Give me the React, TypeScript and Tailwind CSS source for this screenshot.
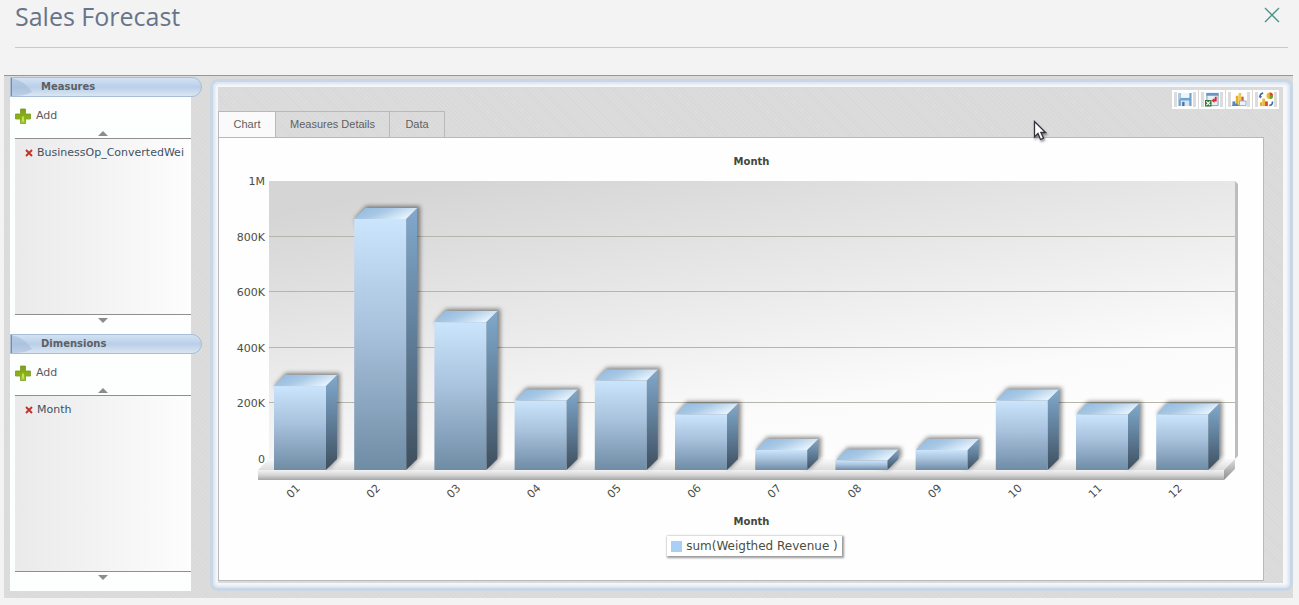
import type { ReactNode } from "react";

const bars = [
  { month: "01", value: 302 },
  { month: "02", value: 903 },
  { month: "03", value: 532 },
  { month: "04", value: 250 },
  { month: "05", value: 322 },
  { month: "06", value: 200 },
  { month: "07", value: 72 },
  { month: "08", value: 34 },
  { month: "09", value: 72 },
  { month: "10", value: 250 },
  { month: "11", value: 200 },
  { month: "12", value: 200 },
];

const ticks = [
  { label: "1M", value: 1000 },
  { label: "800K", value: 800 },
  { label: "600K", value: 600 },
  { label: "400K", value: 400 },
  { label: "200K", value: 200 },
  { label: "0", value: 0 },
];

// plot geometry, in svg units
const WALL_LEFT = 50;
const WALL_RIGHT = 1016;
const WALL_TOP = 11;
const WALL_BOTTOM = 289;
const DEPTH = 11;
const FLOOR = WALL_BOTTOM + DEPTH;
const BAR_WIDTH = 52;
const BAR_STEP = 80.2;

const yFor = (value: number) => WALL_BOTTOM - (value / 1000) * (WALL_BOTTOM - WALL_TOP);

function ForecastChart() {
  return (
    <svg viewBox="0 0 1044 340" className="block h-auto w-full" role="img" aria-label="Weighted revenue by month">
      <defs>
        <linearGradient id="wall" x1="0.2" y1="0" x2="0.8" y2="1">
          <stop offset="0" stopColor="#d5d5d5" />
          <stop offset="0.4" stopColor="#e9e9e9" />
          <stop offset="0.75" stopColor="#fbfbfb" />
          <stop offset="1" stopColor="#fefefe" />
        </linearGradient>
        <linearGradient id="front" x1="0" y1="0" x2="0" y2="1">
          <stop offset="0" stopColor="#cbe5fd" />
          <stop offset="0.45" stopColor="#a8c1dc" />
          <stop offset="1" stopColor="#6f8ca5" />
        </linearGradient>
        <linearGradient id="side" x1="0" y1="0" x2="0" y2="1">
          <stop offset="0" stopColor="#81a9cc" />
          <stop offset="0.5" stopColor="#5f7d98" />
          <stop offset="1" stopColor="#3e4f5e" />
        </linearGradient>
        <linearGradient id="top" x1="0" y1="0" x2="1" y2="0.4">
          <stop offset="0" stopColor="#8fb8de" />
          <stop offset="0.5" stopColor="#a8c8e5" />
          <stop offset="1" stopColor="#e4f2fd" />
        </linearGradient>
        <linearGradient id="floor" x1="0" y1="0" x2="0" y2="1">
          <stop offset="0" stopColor="#fafafa" />
          <stop offset="1" stopColor="#dcdcdc" />
        </linearGradient>
        <linearGradient id="ledge" x1="0" y1="0" x2="0" y2="1">
          <stop offset="0" stopColor="#f3f3f3" />
          <stop offset="0.5" stopColor="#d6d6d6" />
          <stop offset="1" stopColor="#a5a5a5" />
        </linearGradient>
        <linearGradient id="ledgeEnd" x1="0" y1="0" x2="0" y2="1">
          <stop offset="0" stopColor="#dedede" />
          <stop offset="1" stopColor="#8d8d8d" />
        </linearGradient>
        <filter id="barShadow" x="-20%" y="-40%" width="150%" height="180%">
          <feGaussianBlur stdDeviation="2" />
        </filter>
      </defs>

      <rect x={WALL_LEFT} y={WALL_TOP} width={WALL_RIGHT - WALL_LEFT} height={WALL_BOTTOM - WALL_TOP} fill="url(#wall)" />
      <path d={`M${WALL_RIGHT} ${WALL_TOP}l3 3V${WALL_BOTTOM - 3}l-3 3z`} fill="#bdbdbd" />
      {ticks.slice(1, -1).map((tick) => (
        <path key={tick.label} d={`M${WALL_LEFT} ${Math.round(yFor(tick.value)) - 0.5}H${WALL_RIGHT}`} stroke="#b3b6a9" />
      ))}

      <path d={`M39 ${FLOOR}l11 -11H${WALL_RIGHT}l-11 11z`} fill="url(#floor)" />
      <rect x="39" y={FLOOR} width={WALL_RIGHT - 50} height="10" fill="url(#ledge)" />
      <path d={`M1005 ${FLOOR}l11 -11v10l-11 11z`} fill="url(#ledgeEnd)" />

      {bars.map((bar, i) => {
        const x = 55 + i * BAR_STEP;
        const h = WALL_BOTTOM - yFor(bar.value);
        const y = FLOOR - h;
        return (
          <g key={bar.month}>
            <path
              d={`M${x + 1} ${y - 1}l11 -12h54v${h}l-12 12z`}
              fill="#000000"
              fillOpacity="0.45"
              filter="url(#barShadow)"
            />
            <path d={`M${x + BAR_WIDTH} ${y}l${DEPTH} -${DEPTH}v${h}l-${DEPTH} ${DEPTH}z`} fill="url(#side)" />
            <path d={`M${x} ${y}l${DEPTH} -${DEPTH}h${BAR_WIDTH}l-${DEPTH} ${DEPTH}z`} fill="url(#top)" />
            <rect x={x} y={y} width={BAR_WIDTH} height={h} fill="url(#front)" />
          </g>
        );
      })}

      <g fill="#4d4d46" fontFamily="'DejaVu Sans', sans-serif" fontSize="11">
        {ticks.map((tick) => (
          <text key={tick.label} x="46" y={yFor(tick.value) + 4} textAnchor="end">
            {tick.label}
          </text>
        ))}
        {bars.map((bar, i) => {
          const x = 74 + i * BAR_STEP;
          return (
            <text key={bar.month} x={x} y="325" textAnchor="middle" transform={`rotate(-45 ${x} 321)`}>
              {bar.month}
            </text>
          );
        })}
      </g>
    </svg>
  );
}

function PlusIcon() {
  return (
    <svg viewBox="0 0 16 16" className="size-4" aria-hidden="true">
      <defs>
        <linearGradient id="plus" x1="0" y1="0" x2="0" y2="1">
          <stop offset="0" stopColor="#7d9c1c" />
          <stop offset="0.6" stopColor="#8bb312" />
          <stop offset="1" stopColor="#a9d12a" />
        </linearGradient>
      </defs>
      <path d="M5.5 1h5v5h5v5h-5v4.500h-5V11h-5V6h5z" fill="url(#plus)" stroke="#7b9a26" strokeWidth="0.8" />
      <path d="M8 8.500v5" stroke="#d3ea5e" strokeWidth="1.600" />
    </svg>
  );
}

function RemoveIcon() {
  return (
    <svg viewBox="0 0 8 8" className="size-2" aria-hidden="true">
      <path d="M1 1l6 6M7 1L1 7" stroke="#c4302b" strokeWidth="1.900" />
    </svg>
  );
}

function ScrollArrow({ down = false }: { down?: boolean }) {
  return (
    <svg viewBox="0 0 10 5" className="h-[5px] w-2.5" aria-hidden="true">
      <path d={down ? "M0 0h10L5 5z" : "M0 5h10L5 0z"} fill="#8c8c8c" />
    </svg>
  );
}

function FieldSection({ title, field }: { title: string; field: string }) {
  return (
    <section>
      <h2 className="relative flex h-5 items-center overflow-hidden rounded-r-full border border-[#a9bdd6] bg-linear-to-b from-[#d3e2f3] via-[#b9cfe8] to-[#dbe6f2] pb-0.5 pl-[30px] text-[10px] font-bold text-[#5d5f64]">
        <svg viewBox="0 0 24 18" className="absolute top-0 left-0 h-full w-6" aria-hidden="true">
          <path d="M0 0C10 2 16 7 21 14C14 18 6 18 0 18z" fill="#9db7d5" fillOpacity="0.5" />
          <path d="M0.500 0v18" stroke="#6f8db0" />
        </svg>
        {title}
      </h2>
      <div className="mr-[11px] bg-[#fdfefe] pl-[5px]">
        <button type="button" className="flex h-8 items-center gap-[5px] pt-1.5 text-[#5b5b5b]">
          <PlusIcon />
          Add
        </button>
        <button type="button" aria-label={`Scroll ${title} up`} className="flex h-[9px] w-full items-center justify-center">
          <ScrollArrow />
        </button>
        <ul className="h-[177px] border-y border-[#8f8f8f] bg-linear-to-r from-[#eaeaea] to-[#fdfdfd] pt-1.5">
          <li className="flex h-4 items-center gap-1 pl-2.5 whitespace-nowrap text-[#3f5163]">
            <button type="button" aria-label={`Remove ${field}`}>
              <RemoveIcon />
            </button>
            {field}
          </li>
        </ul>
        <button type="button" aria-label={`Scroll ${title} down`} className="flex h-[19px] w-full justify-center pt-[3px]">
          <ScrollArrow down />
        </button>
      </div>
    </section>
  );
}

function ToolButton({ label, children }: { label: string; children: ReactNode }) {
  return (
    <button type="button" aria-label={label} className="flex h-[19px] w-[26px] justify-center border-2 border-white bg-[#dcdcdc]">
      <svg viewBox="0 0 16 16" className="h-[15px] w-4 bg-white" aria-hidden="true">
        {children}
      </svg>
    </button>
  );
}

function Toolbar() {
  return (
    <div className="flex h-6 justify-end gap-px pt-[3px] pr-1">
      <ToolButton label="Save">
        <path d="M1 1h2.500v5h9V1H15v14H1z" fill="#6fa3cf" />
        <path d="M3.500 1h9v5h-9z" fill="#eef5fb" />
        <path d="M1 1h2v7H1z" fill="#a9cbe8" />
        <path d="M3.500 9h9v6h-9z" fill="#d9e6f1" />
        <path d="M5 10.500h2.500V15H5z" fill="#47759f" />
      </ToolButton>
      <ToolButton label="Export to Excel">
        <path d="M2.500 1.500h12v13h-12z" fill="#e6eef7" stroke="#7d9dc2" />
        <path d="M2 1h13v3H2z" fill="#6c95c6" />
        <path d="M12 5v4H9.500" fill="none" stroke="#d22f2c" strokeWidth="2" />
        <path d="M10.500 6.500v5L7.500 9z" fill="#d22f2c" />
        <path d="M0.500 8.500h7v7h-7z" fill="#35763c" />
        <path d="M2 10l4 4M6 10l-4 4" stroke="#ffffff" strokeWidth="1.300" />
      </ToolButton>
      <ToolButton label="Chart settings">
        <path d="M1 10h3v5H1z" fill="#5687c1" />
        <path d="M4.500 4h3v10h-3z" fill="#e6ac2b" />
        <path d="M7.500 1h3v12h-3z" fill="#efcb49" />
        <path d="M10.500 5h2.500v5h-2.500z" fill="#d85540" />
        <path d="M8.500 9.500h7v5h-7z" fill="#edf3fa" stroke="#90abc9" />
        <path d="M0 14l5-2 4 3H1z" fill="#5687c1" />
      </ToolButton>
      <ToolButton label="Change chart type">
        <circle cx="12" cy="4" r="3.500" fill="#e9bc2b" />
        <path d="M12 4V.5A3.500 3.500 0 0 1 15.500 4z" fill="#d2432f" />
        <path d="M12 4h3.500a3.500 3.500 0 0 1-3.500 3.500z" fill="#6f9e31" />
        <path d="M5 1C2.500 1.500 1.500 2.500 1.500 5M15 10c0 3-1 4-3.500 4.500" fill="none" stroke="#35669f" strokeWidth="1.600" />
        <path d="M0 4.500h4L2 7z" fill="#35669f" />
        <path d="M1.500 11H4v4H1.500z" fill="#e6ac2b" />
        <path d="M4 7h3v8H4z" fill="#efb93d" />
        <path d="M7 10h3v5H7z" fill="#d84a3a" />
      </ToolButton>
    </div>
  );
}

function Tabs() {
  const idle = "h-[26px] border-t border-r border-[#b9b9b9]";
  return (
    <div role="tablist" className="flex items-end font-['Liberation_Sans',sans-serif] text-[#5f5f5f]">
      <button type="button" role="tab" aria-selected="true" className="h-[26px] w-[58px] border-x border-t border-[#b9b9b9] bg-[#fafafa]">
        Chart
      </button>
      <button type="button" role="tab" aria-selected="false" className={`${idle} w-[114px]`}>
        Measures Details
      </button>
      <button type="button" role="tab" aria-selected="false" className={`${idle} w-[55px]`}>
        Data
      </button>
    </div>
  );
}

function Pointer() {
  return (
    <svg viewBox="0 0 14 21" className="pointer-events-none absolute top-[120px] left-[1033px] h-[21px] w-3.5 drop-shadow-[1px_2px_1px_rgba(0,0,0,0.4)]" aria-hidden="true">
      <path d="M1.500 1.500v15.500l3.500-3.500 2.500 6 3-1.300-2.600-5.700h4.600z" fill="#ffffff" stroke="#33333f" strokeWidth="1.300" />
    </svg>
  );
}

export default function App() {
  return (
    <main className="relative min-h-screen bg-[#f3f3f3] font-['DejaVu_Sans',sans-serif] text-[11px]">
      <header className="mr-[11px] ml-[15px] flex h-12 items-start justify-between border-b border-[#c9c9c9] pr-2">
        <h1 className="font-['Open_Sans',sans-serif] text-[25px] leading-8 text-[#66758a]">Sales Forecast</h1>
        <button type="button" aria-label="Close" className="pt-[7px]">
          <svg viewBox="0 0 16 16" className="size-4" aria-hidden="true">
            <path d="M1 1l14 14M15 1L1 15" stroke="#4a9489" strokeWidth="1.400" />
          </svg>
        </button>
      </header>

      <div className="mt-[27px] mr-1.5 ml-1 flex gap-2 border-t border-[#96979c] bg-[#dadada] bg-[repeating-linear-gradient(45deg,#d9d9d9_0_1px,#dcdcdc_1px_3px)] pt-px pb-[7px] pl-1.5">
        <aside className="w-48 shrink-0">
          <FieldSection title="Measures" field="BusinessOp_ConvertedWei" />
          <FieldSection title="Dimensions" field="Month" />
        </aside>

        <div className="mt-0.5 flex min-w-0 grow flex-col rounded-lg border-3 border-[#c9d6e6] bg-[#f6f8fb] pt-[5px] pr-[7px] pb-[5px] pl-[5px] shadow-[inset_0_0_3px_2px_#d8e2ee]">
          <div className="grow bg-[#dadada] bg-[repeating-linear-gradient(45deg,#d8d8d8_0_1px,#dcdcdc_1px_3px)]">
            <Toolbar />
            <Tabs />
            <div role="tabpanel" className="mr-[19px] border border-[#b9b9b9] bg-[#fdfefd]">
              <h3 className="pt-4 pl-[21px] text-center text-[10px] leading-4 font-bold text-[#44463c]">Month</h3>
              <ForecastChart />
              <p className="pt-1 pl-[21px] text-center text-[10px] leading-4 font-bold text-[#44463c]">Month</p>
              <div className="flex justify-center pt-1.5 pb-6 pl-[27px]">
                <div className="flex h-5 items-center gap-1 bg-white px-1 text-[12px] text-[#4b4d42] shadow-[1px_1px_2px_1px_rgba(0,0,0,0.4)]">
                  <span className="size-[11px] bg-[#a9d0f4]" />
                  sum(Weigthed Revenue )
                </div>
              </div>
            </div>
          </div>
        </div>
      </div>
      <Pointer />
    </main>
  );
}
